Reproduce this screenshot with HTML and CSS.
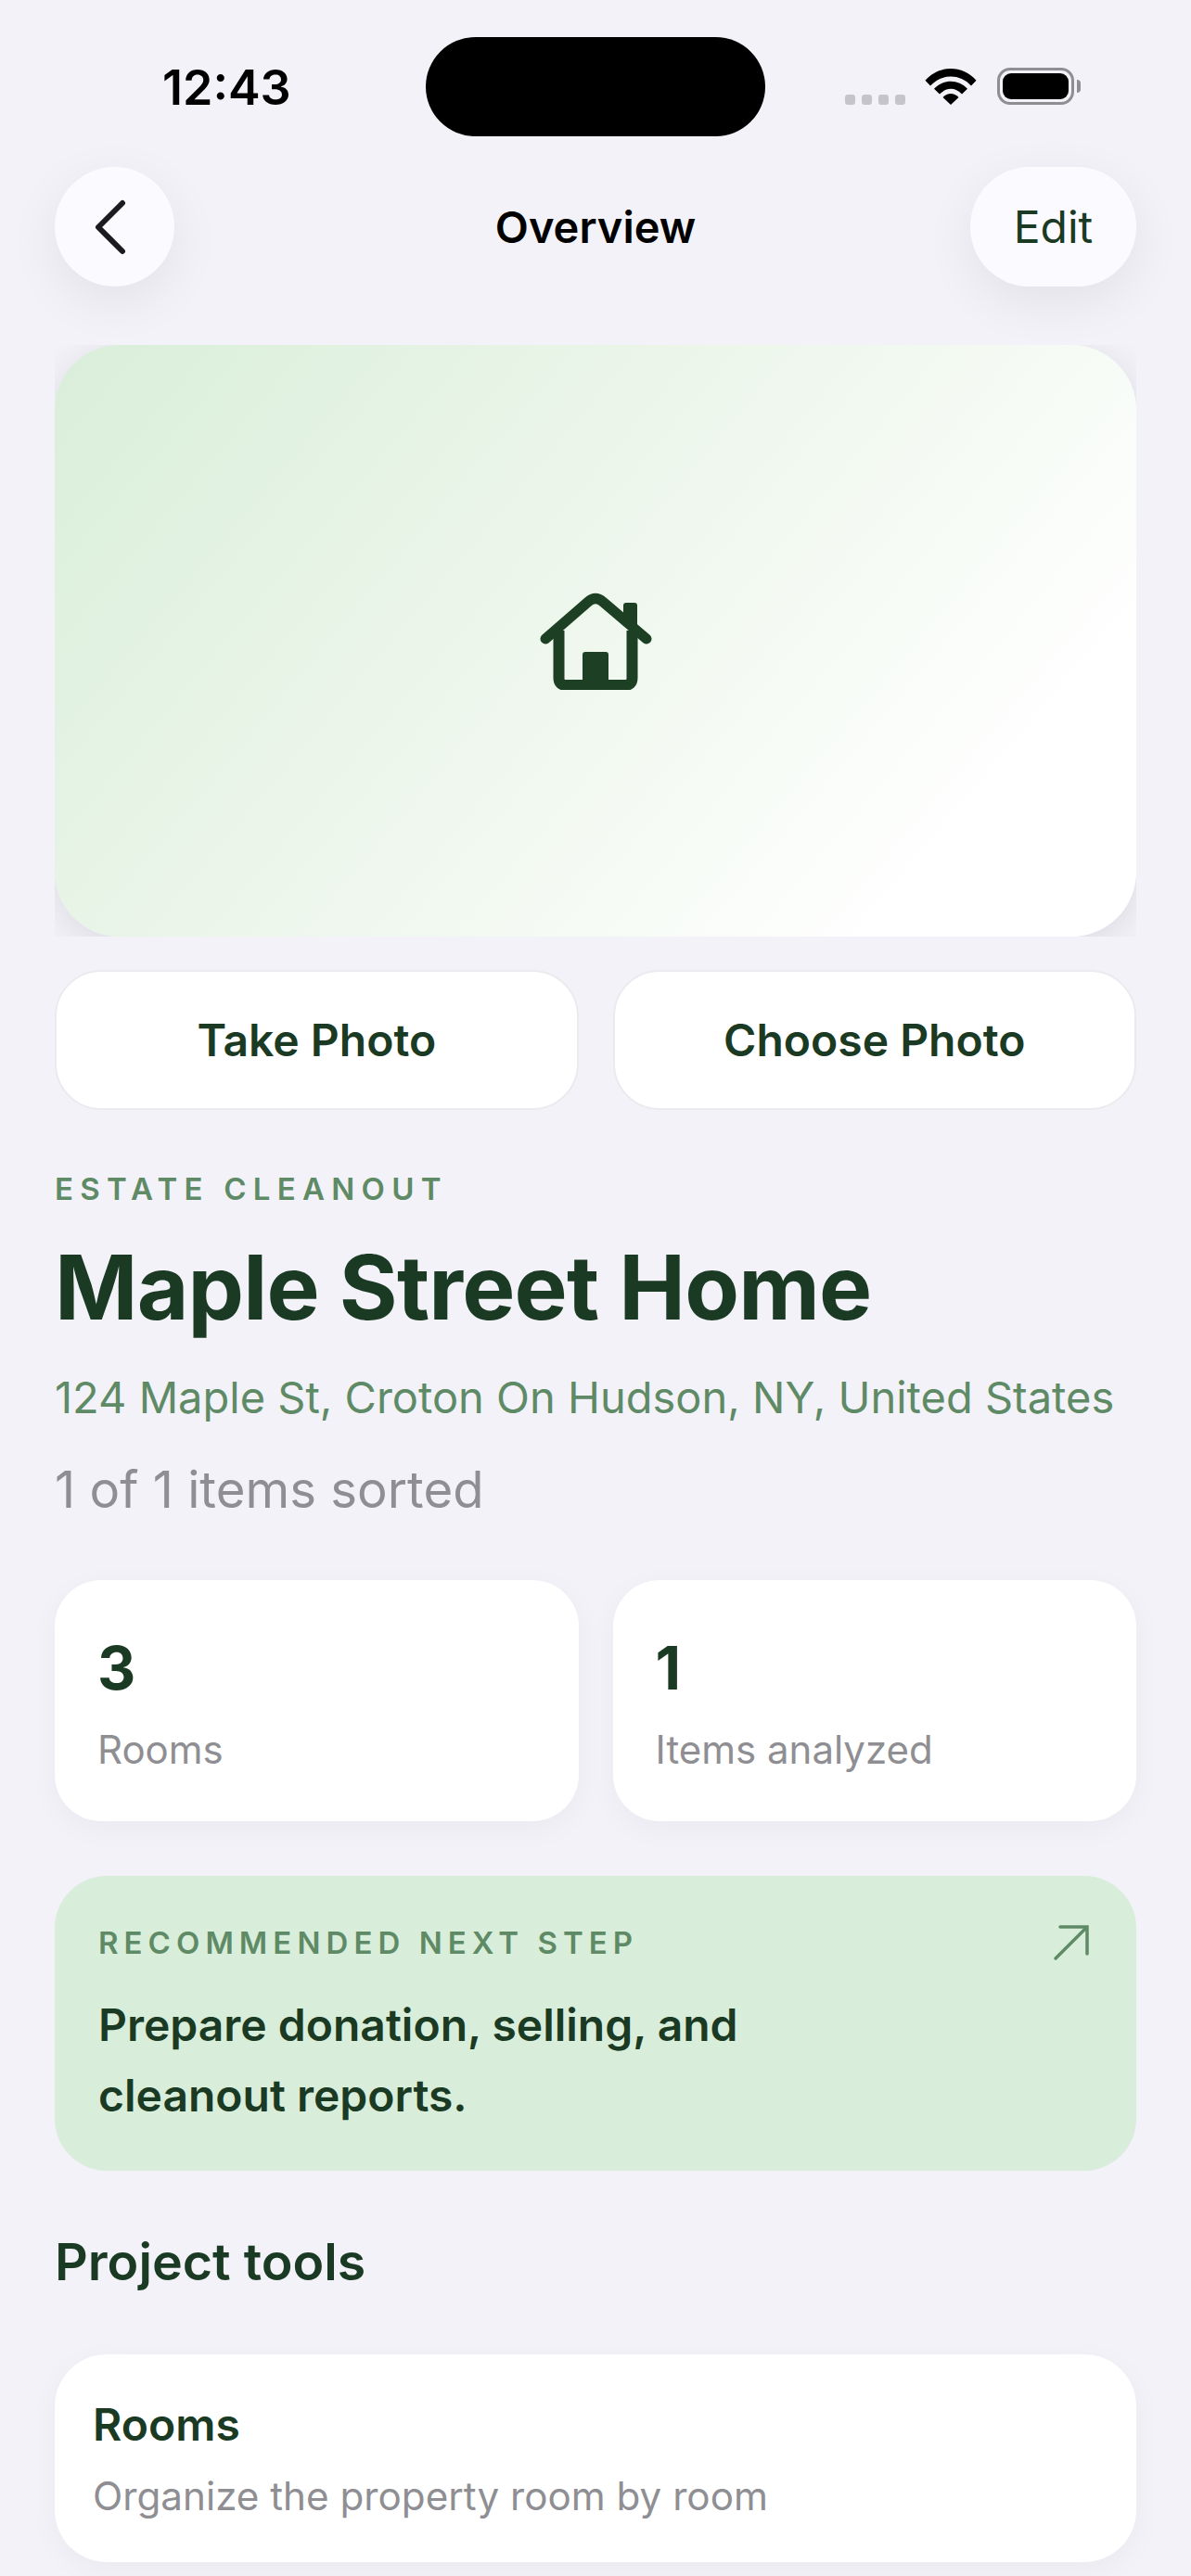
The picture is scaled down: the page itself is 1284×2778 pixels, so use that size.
FILE: index.html
```html
<!DOCTYPE html>
<html>
  <head>
    <meta charset="UTF-8" />
    <meta name="viewport" content="width=device-width, initial-scale=1" />
    <title>Overview</title>
    <link rel="stylesheet" href="styles.css">
  </head>
  <body>
    <div class="status-bar">
      <span class="time">12:43</span>
      <div class="island"></div>
      <div class="status-icons">
        <div class="signal"><i></i><i></i><i></i><i></i></div>
        <svg class="wifi" width="56" height="40" viewBox="0 0 56 42" preserveAspectRatio="none">
          <path d="M0.5 14.5 C15 -3.5 41 -3.5 55.5 14.5 L50 20.5 C38 6.5 18 6.5 6 20.5 Z" fill="#000"/>
          <path d="M10 24 C19.5 12.5 36.5 12.5 46 24 L40 30 C33 22 23 22 16 30 Z" fill="#000"/>
          <path d="M19.5 33.5 C24.5 28 31.5 28 36.5 33.5 L28 42 Z" fill="#000"/>
        </svg>
        <div class="battery"><div class="battery-fill"></div></div>
        <div class="battery-cap"></div>
      </div>
    </div>

    <div class="nav">
      <div class="nav-left">
        <button class="round-btn">
          <svg class="chevron" width="34" height="60" viewBox="0 0 34 60">
            <path d="M30 4 L4 30 L30 56" fill="none" stroke="#1c1c1e" stroke-width="6" stroke-linecap="round" stroke-linejoin="round"/>
          </svg>
        </button>
      </div>
      <div class="nav-title">Overview</div>
      <div class="nav-right">
        <button class="edit-btn">Edit</button>
      </div>
    </div>

    <div class="page">
      <div class="hero-wrap">
        <div class="hero">
          <svg width="122" height="106" viewBox="0 0 122 106">
            <path d="M7 51 L53 11 Q61 4 69 11 L116 51" fill="none" stroke="#1d4024" stroke-width="11" stroke-linecap="round" stroke-linejoin="round"/>
            <path d="M21.5 42 V93 Q21.5 101 29.5 101 H92.5 Q100.5 101 100.5 93 V42" fill="none" stroke="#1d4024" stroke-width="12"/>
            <path d="M91 15 Q91 12 94 12 H103 Q106 12 106 15 V50 L91 35 Z" fill="#1d4024"/>
            <path d="M47 68 Q47 65 50 65 H72 Q75 65 75 68 V101 H47 Z" fill="#1d4024"/>
          </svg>
        </div>
      </div>

      <div class="photo-btns">
        <button class="photo-btn">Take Photo</button>
        <button class="photo-btn">Choose Photo</button>
      </div>

      <div class="eyebrow">ESTATE CLEANOUT</div>
      <h1 class="title">Maple Street Home</h1>
      <div class="address">124 Maple St, Croton On Hudson, NY, United States</div>
      <div class="progress">1 of 1 items sorted</div>

      <div class="stats">
        <div class="stat-card">
          <div class="stat-num">3</div>
          <div class="stat-label">Rooms</div>
        </div>
        <div class="stat-card">
          <div class="stat-num">1</div>
          <div class="stat-label">Items analyzed</div>
        </div>
      </div>

      <div class="next-step">
        <div class="next-head">
          <span class="next-label">RECOMMENDED NEXT STEP</span>
          <svg width="40" height="40" viewBox="0 0 40 40">
            <path d="M3 37 L36 4 M8 3 H37 V32" fill="none" stroke="#5f8a66" stroke-width="3.5" stroke-linecap="round"/>
          </svg>
        </div>
        <div class="next-text">Prepare donation, selling, and<br>cleanout reports.</div>
      </div>

      <h2 class="section-title">Project tools</h2>

      <div class="tool-card">
        <div class="tool-name">Rooms</div>
        <div class="tool-desc">Organize the property room by room</div>
      </div>
    </div>
  </body>
</html>
```

FILE: styles.css
```css
/* Base */
html, body {
  margin: 0;
  padding: 0;
  height: 2778px;
  overflow: hidden;
  background: #f2f2f8;
  font-family: Inter, "Liberation Sans", sans-serif;
  color: #1b3a24;
}

button {
  font-family: inherit;
  border: none;
  cursor: pointer;
}

/* Status bar */
.status-bar {
  height: 180px;
  display: flex;
  align-items: flex-start;
  box-sizing: border-box;
  padding-top: 40px;
}

.time {
  width: 459px;
  box-sizing: border-box;
  padding: 25px 0 0 175px;
  font-size: 52px;
  line-height: 60px;
  font-weight: 600;
  color: #000;
}

.island {
  width: 366px;
  height: 107px;
  border-radius: 54px;
  background: #000;
}

.status-icons {
  display: flex;
  align-items: flex-end;
  padding: 33px 0 0 86px;
}

.signal {
  display: flex;
  gap: 7px;
  margin-right: 21px;
}

.signal i {
  width: 11px;
  height: 11px;
  border-radius: 3px;
  background: #c4c4c9;
}

.wifi {
  margin-right: 22px;
}

.battery {
  width: 83px;
  height: 40px;
  box-sizing: border-box;
  border: 3px solid #8e8e93;
  border-radius: 14px;
  padding: 3px;
}

.battery-fill {
  height: 100%;
  border-radius: 9px;
  background: #000;
}

.battery-cap {
  width: 4px;
  height: 14px;
  margin: 0 0 13px 3px;
  border-radius: 0 4px 4px 0;
  background: #8e8e93;
}

/* Nav */
.nav {
  height: 129px;
  padding: 0 59px;
  display: grid;
  grid-template-columns: 1fr auto 1fr;
  align-items: center;
}

.nav-right {
  display: flex;
  justify-content: flex-end;
}

.round-btn {
  width: 129px;
  height: 129px;
  border-radius: 50%;
  background: #fafaff;
  box-shadow: 0 16px 56px rgba(0,0,0,0.07);
  display: flex;
  align-items: center;
  justify-content: center;
  padding: 0;
}

.chevron {
  margin-right: 10px;
}

.edit-btn {
  width: 179px;
  height: 129px;
  border-radius: 64px;
  background: #fafaff;
  box-shadow: 0 16px 56px rgba(0,0,0,0.07);
  font-size: 48px;
  color: #1b3a24;
}

.nav-title {
  font-size: 47px;
  font-weight: 600;
  color: #000;
}

.page {
  padding: 63px 59px 0;
}

/* Hero */
.hero-wrap {
  height: 638px;
  overflow: hidden;
}

.hero {
  height: 638px;
  border-radius: 70px;
  background: linear-gradient(130deg, #d9eeda 0%, #ecf6ea 42%, #ffffff 85%);
  box-shadow: 0 8px 40px rgba(0,0,0,0.1);
  display: flex;
  align-items: center;
  justify-content: center;
}

/* Photo buttons */
.photo-btns {
  display: grid;
  grid-template-columns: 1fr 1fr;
  gap: 37px;
  margin-top: 36px;
}

.photo-btn {
  height: 151px;
  background: #fff;
  border: 2px solid #ebebef;
  border-radius: 50px;
  font-size: 48px;
  font-weight: 600;
  color: #1b3a24;
}

/* Heading block */
.eyebrow {
  margin-top: 65px;
  font-size: 33px;
  line-height: 40px;
  font-weight: 600;
  letter-spacing: 7.25px;
  color: #5f8a66;
}

.title {
  margin: 28px 0 0;
  font-size: 96px;
  line-height: 116px;
  font-weight: 700;
  letter-spacing: -0.8px;
  color: #1b3a24;
}

.address {
  margin-top: 32px;
  font-size: 47px;
  line-height: 58px;
  white-space: nowrap;
  color: #5f8a66;
}

.progress {
  margin-top: 36px;
  font-size: 54.5px;
  line-height: 68px;
  color: #8e8e93;
}

/* Stats */
.stats {
  display: grid;
  grid-template-columns: 1fr 1fr;
  gap: 37px;
  margin-top: 64px;
}

.stat-card {
  height: 260px;
  box-sizing: border-box;
  padding: 57px 46px 0;
  background: #fff;
  border-radius: 50px;
  box-shadow: 0 8px 32px rgba(0,0,0,0.04);
}

.stat-num {
  font-size: 64px;
  line-height: 76px;
  font-weight: 700;
  color: #1b3a24;
}

.stat-label {
  margin-top: 24px;
  font-size: 42px;
  line-height: 52px;
  color: #8e8e93;
}

/* Next step */
.next-step {
  margin-top: 59px;
  height: 318px;
  box-sizing: border-box;
  padding: 52px 50px 0 47px;
  background: #d9eeda;
  border-radius: 56px;
}

.next-head {
  display: flex;
  align-items: center;
  justify-content: space-between;
}

.next-label {
  font-size: 33px;
  font-weight: 600;
  letter-spacing: 6.05px;
  color: #5f8a66;
}

.next-text {
  margin-top: 31px;
  font-size: 48px;
  line-height: 76px;
  font-weight: 600;
  color: #1b3a24;
}

/* Tools */
.section-title {
  margin: 64px 0 0;
  font-size: 55.5px;
  line-height: 68px;
  font-weight: 600;
  color: #1b3a24;
}

.tool-card {
  margin-top: 66px;
  height: 224px;
  box-sizing: border-box;
  padding: 47px 41px 0;
  background: #fff;
  border-radius: 56px;
  box-shadow: 0 8px 32px rgba(0,0,0,0.04);
}

.tool-name {
  font-size: 48px;
  line-height: 58px;
  font-weight: 600;
  color: #1b3a24;
}

.tool-desc {
  margin-top: 22px;
  font-size: 42.2px;
  line-height: 52px;
  color: #8e8e93;
}
```
